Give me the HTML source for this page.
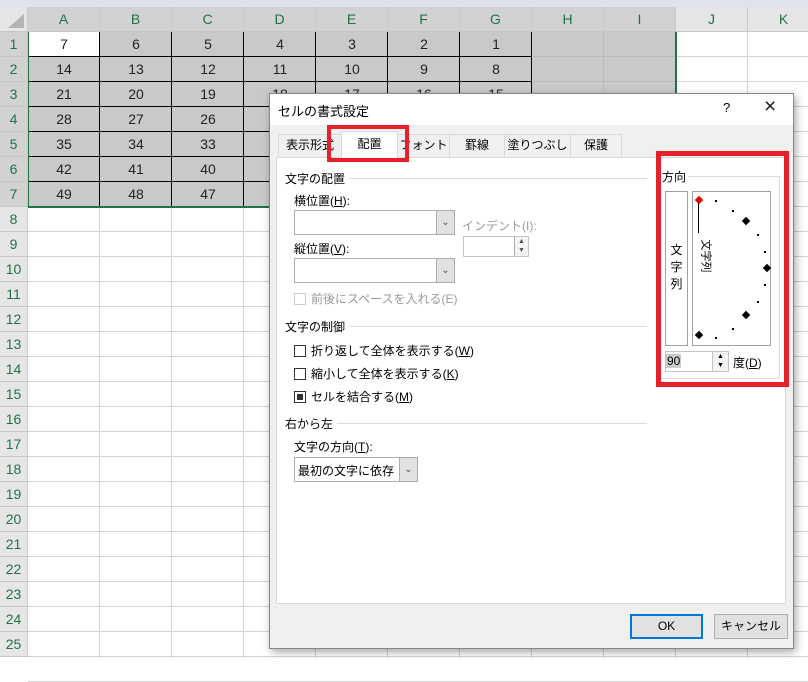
<!DOCTYPE html>
<html><head><meta charset="utf-8">
<style>
*{box-sizing:border-box;margin:0;padding:0}
body{width:808px;height:658px;overflow:hidden;background:#fff;position:relative;font-family:"Liberation Sans","Noto Sans CJK JP",sans-serif;}
.a{position:absolute;white-space:nowrap}
.hdr{background:#e6e6e6;color:#217346;font-size:14px;text-align:center;border-right:1px solid #c8c8c8;border-bottom:1px solid #c8c8c8}
.cell{font-size:14px;color:#222;text-align:center;line-height:24px}
.dlg{font-size:12px;color:#000}
.dd{position:absolute;background:#fff;border:1px solid #adadad;white-space:nowrap}
.dd .arr{position:absolute;right:0;top:0;bottom:0;width:18px;background:#e1e1e1;border-left:1px solid #adadad;font-size:10px;color:#555;text-align:center}
.sep{position:absolute;height:1px;background:#dcdcdc}
.tab{position:absolute;top:40px;height:23px;border:1px solid #d9d9d9;border-bottom:none;background:#f0f0f0;text-align:center;line-height:21px;white-space:nowrap;overflow:hidden}
.cb{display:inline-block;width:12px;height:12px;border:1px solid #333;background:#fff;vertical-align:-2px;margin-right:5px;position:relative}
.dot{position:absolute;width:2px;height:2px;background:#000}
.dia{position:absolute;width:6px;height:6px;background:#000;transform:rotate(45deg)}
</style></head><body>
<div class="a" style="left:0;top:0;width:808px;height:7px;background:#dfe3eb"></div>
<div id="grid"></div>
<script>
var g=document.getElementById('grid'),h='';
var cx=[0,28,100,172,244,316,388,460,532,604,676,748,820];
var L='ABCDEFGHIJK';
for(var c=1;c<12;c++)h+='<div class="a" style="left:'+(cx[c+1]-1)+'px;top:32px;width:1px;height:626px;background:#d4d4d4"></div>';
for(var r=1;r<=26;r++)h+='<div class="a" style="left:28px;top:'+(31+25*r)+'px;width:780px;height:1px;background:#d4d4d4"></div>';
h+='<div class="a" style="left:28px;top:32px;width:648px;height:175px;background:#c9c9c9"></div>';
h+='<div class="a" style="left:29px;top:32px;width:71px;height:24px;background:#fff"></div>';
for(var c=1;c<7;c++)h+='<div class="a" style="left:'+(cx[c+1]-1)+'px;top:32px;width:1px;height:175px;background:#000"></div>';
h+='<div class="a" style="left:531px;top:32px;width:1px;height:175px;background:#000"></div>';
for(var r=1;r<7;r++)h+='<div class="a" style="left:28px;top:'+(31+25*r)+'px;width:504px;height:1px;background:#000"></div>';
for(var r=1;r<7;r++)h+='<div class="a" style="left:532px;top:'+(31+25*r)+'px;width:144px;height:1px;background:#bbb"></div>';
h+='<div class="a" style="left:603px;top:32px;width:1px;height:175px;background:#bbb"></div>';
h+='<div class="a" style="left:27px;top:30px;width:650px;height:178px;border:2px solid #217346"></div>';
h+='<div class="a hdr" style="left:0;top:7px;width:28px;height:25px;background:#e6e6e6"></div>';
h+='<div class="a" style="left:8px;top:14px;width:0;height:0;border-left:16px solid transparent;border-bottom:14px solid #b4b4b4"></div>';
for(var c=0;c<11;c++)h+='<div class="a hdr" style="left:'+cx[c+1]+'px;top:7px;width:'+(cx[c+2]-cx[c+1])+'px;height:25px;line-height:24px;'+(c<9?'background:#d2d2d2;':'')+'">'+L[c]+'</div>';
for(var r=1;r<=25;r++)h+='<div class="a hdr" style="left:0;top:'+(7+25*r)+'px;width:28px;height:25px;line-height:24px;'+(r<8?'background:#d2d2d2;':'')+'">'+r+'</div>';
for(var r=1;r<=7;r++)for(var c=0;c<7;c++){var v=7*(r-1)+7-c;h+='<div class="a cell" style="left:'+cx[c+1]+'px;top:'+(7+25*r)+'px;width:72px;height:25px">'+v+'</div>';}
g.innerHTML=h;
</script>
<div class="a dlg" style="left:269px;top:93px;width:525px;height:556px;background:#f0f0f0;border:1px solid #888;box-shadow:2px 3px 8px rgba(0,0,0,.35)">
  <div class="a" style="left:0;top:0;width:523px;height:31px;background:#fff"></div>
  <div class="a" style="left:8px;top:7px;font-size:13px">セルの書式設定</div>
  <div class="a" style="left:453px;top:6px;font-size:13px">?</div>
  <div class="a" style="left:494px;top:1px;font-size:21px;font-weight:300;color:#222">×</div>
  <div class="tab" style="left:8px;width:64px">表示形式</div>
  <div class="tab" style="left:71px;top:37px;width:57px;height:27px;background:#fff;line-height:25px;z-index:2">配置</div>
  <div class="tab" style="left:127px;width:53px">フォント</div>
  <div class="tab" style="left:179px;width:56px">罫線</div>
  <div class="tab" style="left:234px;width:67px">塗りつぶし</div>
  <div class="tab" style="left:300px;width:52px">保護</div>
  <div class="a" style="left:6px;top:63px;width:510px;height:447px;background:#fff;border:1px solid #d9d9d9">
    <div class="a" style="left:8px;top:12px">文字の配置</div><div class="sep" style="left:72px;top:20px;width:298px"></div>
    <div class="a" style="left:17px;top:34px">横位置(<u>H</u>):</div>
    <div class="dd" style="left:17px;top:52px;width:161px;height:25px"><div class="arr" style="line-height:23px">&#8964;</div></div>
    <div class="a" style="left:185px;top:59px;color:#9a9a9a">インデント(I):</div>
    <div class="dd" style="left:186px;top:78px;width:66px;height:21px;border-color:#c4c4c4"><div class="arr" style="width:14px;background:#f4f4f4;line-height:9px;font-size:7px">▲<br>▼</div></div>
    <div class="a" style="left:17px;top:82px">縦位置(<u>V</u>):</div>
    <div class="dd" style="left:17px;top:100px;width:161px;height:25px"><div class="arr" style="line-height:23px">&#8964;</div></div>
    <div class="a" style="left:17px;top:132px;color:#9a9a9a"><span class="cb" style="border-color:#ccc"></span>前後にスペースを入れる(E)</div>
    <div class="a" style="left:8px;top:160px">文字の制御</div><div class="sep" style="left:72px;top:168px;width:298px"></div>
    <div class="a" style="left:17px;top:184px"><span class="cb"></span>折り返して全体を表示する(<u>W</u>)</div>
    <div class="a" style="left:17px;top:207px"><span class="cb"></span>縮小して全体を表示する(<u>K</u>)</div>
    <div class="a" style="left:17px;top:230px"><span class="cb"><span class="a" style="left:2px;top:2px;width:6px;height:6px;background:#333"></span></span>セルを結合する(<u>M</u>)</div>
    <div class="a" style="left:8px;top:257px">右から左</div><div class="sep" style="left:60px;top:265px;width:310px"></div>
    <div class="a" style="left:17px;top:280px">文字の方向(<u>T</u>):</div>
    <div class="dd" style="left:17px;top:299px;width:124px;height:25px;padding:4px 3px">最初の文字に依存<div class="arr" style="line-height:23px">&#8964;</div></div>
    <div class="a" style="left:379px;top:18px;width:124px;height:203px;border:1px solid #dcdcdc"></div>
    <div class="a" style="left:385px;top:10px;background:#fff;padding-right:2px">方向</div>
    <div class="a" style="left:388px;top:33px;width:23px;height:155px;border:1px solid #a0a0a0;text-align:center;line-height:17px;padding-top:50px;white-space:normal">文<br>字<br>列</div>
    <div class="a" style="left:415px;top:33px;width:79px;height:155px;border:1px solid #a0a0a0">
      <div class="dia" style="left:3px;top:5px;background:#e00"></div>
      <div class="a" style="left:5px;top:11px;width:1px;height:30px;background:#000"></div>
      <div class="a" style="left:-3px;top:56px;transform:rotate(90deg);font-size:11px">文字列</div>
      <div class="dot" style="left:22px;top:8px"></div><div class="dot" style="left:39px;top:18px"></div>
      <div class="dia" style="left:50px;top:26px"></div><div class="dot" style="left:64px;top:42px"></div>
      <div class="dot" style="left:71px;top:59px"></div><div class="dia" style="left:71px;top:73px"></div>
      <div class="dot" style="left:71px;top:92px"></div><div class="dot" style="left:64px;top:109px"></div>
      <div class="dia" style="left:50px;top:120px"></div><div class="dot" style="left:39px;top:136px"></div>
      <div class="dot" style="left:22px;top:145px"></div><div class="dia" style="left:3px;top:140px"></div>
    </div>
    <div class="a" style="left:388px;top:193px;width:64px;height:21px;border:1px solid #c4c4c4;background:#fff"><span style="background:#ccc;padding:0 1px;line-height:19px">90</span><div class="a" style="right:0;top:0;bottom:0;width:16px;background:#f4f4f4;border-left:1px solid #c4c4c4;font-size:7px;line-height:9px;text-align:center">▲<br>▼</div></div>
    <div class="a" style="left:456px;top:196px">度(<u>D</u>)</div>
  </div>
  <div class="a" style="left:360px;top:520px;width:73px;height:25px;border:2px solid #0078d7;background:#e1e1e1;text-align:center;line-height:21px">OK</div>
  <div class="a" style="left:444px;top:520px;width:74px;height:25px;border:1px solid #adadad;background:#e1e1e1;text-align:center;line-height:23px">キャンセル</div>
</div>
<div class="a" style="left:327px;top:125px;width:82px;height:37px;border:4px solid #e8202a"></div>
<div class="a" style="left:656px;top:151px;width:133px;height:236px;border:5px solid #e8202a"></div>
</body></html>
